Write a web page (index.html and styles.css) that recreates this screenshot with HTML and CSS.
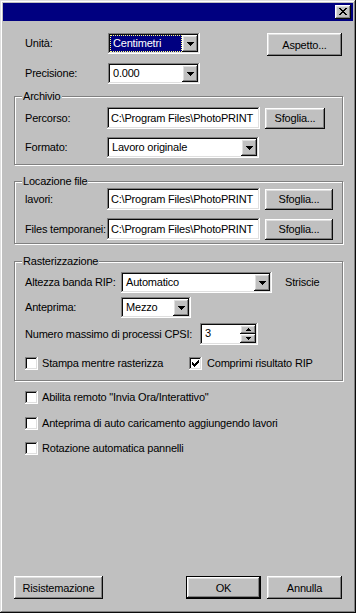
FILE: index.html
```html
<!DOCTYPE html>
<html lang="it">
<head>
  <meta charset="UTF-8" />
  <title>Preferenze</title>
  <link rel="stylesheet" href="styles.css">
</head>
<body>
  <div class="dialog">
    <div class="titlebar">
      <button class="btn close" type="button">
        <svg width="8" height="7" viewBox="0 0 8 7" shape-rendering="crispEdges"><path d="M0 0h2v1H0zM6 0h2v1H6zM1 1h2v1H1zM5 1h2v1H5zM2 2h4v1H2zM3 3h2v1H3zM2 4h4v1H2zM1 5h2v1H1zM5 5h2v1H5zM0 6h2v1H0zM6 6h2v1H6z"/></svg>
      </button>
    </div>

    <div class="content">
      <!-- unità / precisione -->
      <div class="row top-row">
        <span class="lbl lbl-top">Unità:</span>
        <div class="combo combo-small">
          <span class="val"><span class="sel">Centimetri</span></span>
          <span class="btn arrow"><svg width="7" height="4" viewBox="0 0 7 4" shape-rendering="crispEdges"><path d="M0 0h7v1H0zM1 1h5v1H1zM2 2h3v1H2zM3 3h1v1H3z"/></svg></span>
        </div>
        <button class="btn big aspetto" type="button">Aspetto...</button>
      </div>
      <div class="row top-row row-prec">
        <span class="lbl lbl-top">Precisione:</span>
        <div class="combo combo-small">
          <span class="val">0.000</span>
          <span class="btn arrow"><svg width="7" height="4" viewBox="0 0 7 4" shape-rendering="crispEdges"><path d="M0 0h7v1H0zM1 1h5v1H1zM2 2h3v1H2zM3 3h1v1H3z"/></svg></span>
        </div>
      </div>

      <fieldset class="group archivio">
        <legend>Archivio</legend>
        <div class="row frow">
          <span class="lbl lbl-path">Percorso:</span>
          <div class="field path">C:\Program Files\PhotoPRINT</div>
          <button class="btn browse browse-short" type="button">Sfoglia...</button>
        </div>
        <div class="row frow gap8">
          <span class="lbl lbl-path">Formato:</span>
          <div class="combo combo-format">
            <span class="val">Lavoro originale</span>
            <span class="btn arrow"><svg width="7" height="4" viewBox="0 0 7 4" shape-rendering="crispEdges"><path d="M0 0h7v1H0zM1 1h5v1H1zM2 2h3v1H2zM3 3h1v1H3z"/></svg></span>
          </div>
        </div>
      </fieldset>

      <fieldset class="group locazione">
        <legend>Locazione file</legend>
        <div class="row frow">
          <span class="lbl lbl-path">lavori:</span>
          <div class="field path">C:\Program Files\PhotoPRINT</div>
          <button class="btn browse" type="button">Sfoglia...</button>
        </div>
        <div class="row frow gap8">
          <span class="lbl lbl-path">Files temporanei:</span>
          <div class="field path">C:\Program Files\PhotoPRINT</div>
          <button class="btn browse" type="button">Sfoglia...</button>
        </div>
      </fieldset>

      <fieldset class="group raster">
        <legend>Rasterizzazione</legend>
        <div class="row">
          <span class="lbl lbl-raster">Altezza banda RIP:</span>
          <div class="combo combo-band">
            <span class="val">Automatico</span>
            <span class="btn arrow"><svg width="7" height="4" viewBox="0 0 7 4" shape-rendering="crispEdges"><path d="M0 0h7v1H0zM1 1h5v1H1zM2 2h3v1H2zM3 3h1v1H3z"/></svg></span>
          </div>
          <span class="lbl unit">Striscie</span>
        </div>
        <div class="row gap4">
          <span class="lbl lbl-raster">Anteprima:</span>
          <div class="combo combo-preview">
            <span class="val">Mezzo</span>
            <span class="btn arrow"><svg width="7" height="4" viewBox="0 0 7 4" shape-rendering="crispEdges"><path d="M0 0h7v1H0zM1 1h5v1H1zM2 2h3v1H2zM3 3h1v1H3z"/></svg></span>
          </div>
        </div>
        <div class="row gap5">
          <span class="lbl lbl-cpsi">Numero massimo di processi CPSI:</span>
          <div class="spin">
            <span class="val">3</span>
            <span class="spin-btns">
              <span class="btn sbtn"><svg width="5" height="3" viewBox="0 0 5 3" shape-rendering="crispEdges"><path d="M2 0h1v1H2zM1 1h3v1H1zM0 2h5v1H0z"/></svg></span>
              <span class="btn sbtn"><svg width="5" height="3" viewBox="0 0 5 3" shape-rendering="crispEdges"><path d="M0 0h5v1H0zM1 1h3v1H1zM2 2h1v1H2z"/></svg></span>
            </span>
          </div>
        </div>
        <div class="row checks gap10">
          <label class="check check-first"><span class="box"></span>Stampa mentre rasterizza</label>
          <label class="check"><span class="box"><svg width="7" height="7" viewBox="0 0 7 7" shape-rendering="crispEdges"><path d="M6 0h1v1H6zM5 1h2v1H5zM0 2h1v1H0zM4 2h3v1H4zM0 3h2v1H0zM3 3h3v1H3zM0 4h5v1H0zM1 5h3v1H1zM2 6h1v1H2z"/></svg></span>Comprimi risultato RIP</label>
        </div>
      </fieldset>

      <label class="check solo first-solo"><span class="box"></span>Abilita remoto "Invia Ora/Interattivo"</label>
      <label class="check solo gap10"><span class="box"></span>Anteprima di auto caricamento aggiungendo lavori</label>
      <label class="check solo gap9"><span class="box"></span>Rotazione automatica pannelli</label>

      <div class="row footer">
        <button class="btn big reset" type="button">Risistemazione</button>
        <button class="btn big default" type="button">OK</button>
        <button class="btn big" type="button">Annulla</button>
      </div>
    </div>
  </div>
</body>
</html>
```

FILE: styles.css
```css
* {
  box-sizing: border-box;
}
body {
  margin: 0;
  background: #c0c0c0;
  font-family: "Liberation Sans", Arial, sans-serif;
  font-size: 11px;
  letter-spacing: -0.2px;
  color: #000;
}
.dialog {
  width: 356px;
  height: 613px;
  padding: 3px;
  background: #c0c0c0;
  display: flex;
  flex-direction: column;
  box-shadow: inset -1px -1px #0a0a0a, inset 1px 1px #dfdfdf, inset -2px -2px #808080, inset 2px 2px #fff;
}
.titlebar {
  height: 18px;
  flex: none;
  background: #000080;
  display: flex;
  justify-content: flex-end;
  align-items: center;
  padding-right: 2px;
}

/* raised 3d look shared by every button */
.btn {
  background: #c0c0c0;
  border: 0;
  padding: 0;
  margin: 0;
  font: inherit;
  letter-spacing: inherit;
  color: #000;
  display: flex;
  align-items: center;
  justify-content: center;
  box-shadow: inset -1px -1px #0a0a0a, inset 1px 1px #fff, inset -2px -2px #808080, inset 2px 2px #dfdfdf;
}
.close {
  width: 16px;
  height: 14px;
  padding: 0 1px 1px 0;
}

.content {
  flex: 1;
  display: flex;
  flex-direction: column;
  padding: 12px 10px 11px 11px;
}
.row {
  display: flex;
  align-items: center;
}
.lbl {
  white-space: nowrap;
  line-height: 13px;
}
.top-row {
  padding-left: 11px;
  align-items: flex-start;
  height: 23px;
}
.top-row .lbl {
  line-height: 21px;
}
.row-prec {
  margin-top: 7px;
  height: 21px;
}
.lbl-top { width: 83px; }
.lbl-path { width: 82px; }
.lbl-raster { width: 96px; }
.lbl-cpsi { width: 175px; }
.unit { margin-left: 13px; }

.big {
  width: 75px;
  height: 23px;
}
.aspetto {
  margin-left: auto;
  margin-right: 1px;
}

/* sunken fields */
.field, .combo, .spin {
  background: #fff;
  padding: 2px;
  box-shadow: inset -1px -1px #fff, inset 1px 1px #808080, inset -2px -2px #dfdfdf, inset 2px 2px #0a0a0a;
}
.combo {
  height: 21px;
  display: flex;
}
.combo .val, .spin .val {
  flex: 1;
  line-height: 17px;
  padding-left: 3px;
  white-space: nowrap;
  overflow: hidden;
}
.combo .sel {
  display: block;
  height: 17px;
  margin-left: -3px;
  padding-left: 3px;
  background: #000080;
  color: #fff;
  outline: 1px dotted #ffff80;
  outline-offset: -1px;
}
.arrow {
  width: 16px;
  height: 17px;
}
.combo-small { width: 92px; }
.combo-format { width: 152px; }
.combo-band { width: 151px; }
.combo-preview { width: 70px; }

.field {
  height: 22px;
  line-height: 18px;
  padding-left: 4px;
  white-space: nowrap;
  overflow: hidden;
}
.path { width: 153px; }

.browse {
  width: 68px;
  height: 21px;
  margin-left: 5px;
}
.browse-short { width: 60px; }

/* group boxes */
.group {
  margin: 0;
  min-width: 0;
  border: 1px solid #808080;
  box-shadow: 1px 1px #fff, inset 1px 1px #fff;
}
.group legend {
  padding: 0 1px;
  margin-left: -3px;
  line-height: 13px;
  background: #c0c0c0;
}
.archivio {
  margin-top: 6px;
  padding: 4px 9px 6px 10px;
}
.locazione {
  margin-top: 10px;
  padding: 0 9px 3px 10px;
}
.raster {
  margin-top: 11px;
  padding: 4px 9px 9px 10px;
}
.gap4 { margin-top: 4px; }
.gap5 { margin-top: 5px; }
.gap8 { margin-top: 8px; }
.gap9 { margin-top: 9px; }
.gap10 { margin-top: 10px; }

.spin {
  width: 58px;
  height: 22px;
  display: flex;
}
.spin-btns {
  display: flex;
  flex-direction: column;
  width: 16px;
}
.sbtn {
  height: 9px;
}

/* checkboxes */
.check {
  display: flex;
  align-items: center;
  height: 16px;
  white-space: nowrap;
}
.box {
  width: 13px;
  height: 13px;
  margin-right: 4px;
  background: #fff;
  display: flex;
  align-items: center;
  justify-content: center;
  box-shadow: inset -1px -1px #fff, inset 1px 1px #808080, inset -2px -2px #dfdfdf, inset 2px 2px #0a0a0a;
}
.check-first { width: 164px; }
.checks .check:last-child .box { margin-right: 5px; }
.solo {
  padding-left: 11px;
}
.first-solo { margin-top: 8px; }

.footer {
  margin-top: auto;
  height: 23px;
}
.reset {
  width: 89px;
  margin-right: auto;
}
.default {
  margin-right: 6px;
  outline: 1px solid #000;
  outline-offset: -1px;
  box-shadow: inset -2px -2px #0a0a0a, inset 2px 2px #fff, inset -3px -3px #808080, inset 3px 3px #dfdfdf;
}
.footer .btn:last-child {
  margin-right: 1px;
}
```
